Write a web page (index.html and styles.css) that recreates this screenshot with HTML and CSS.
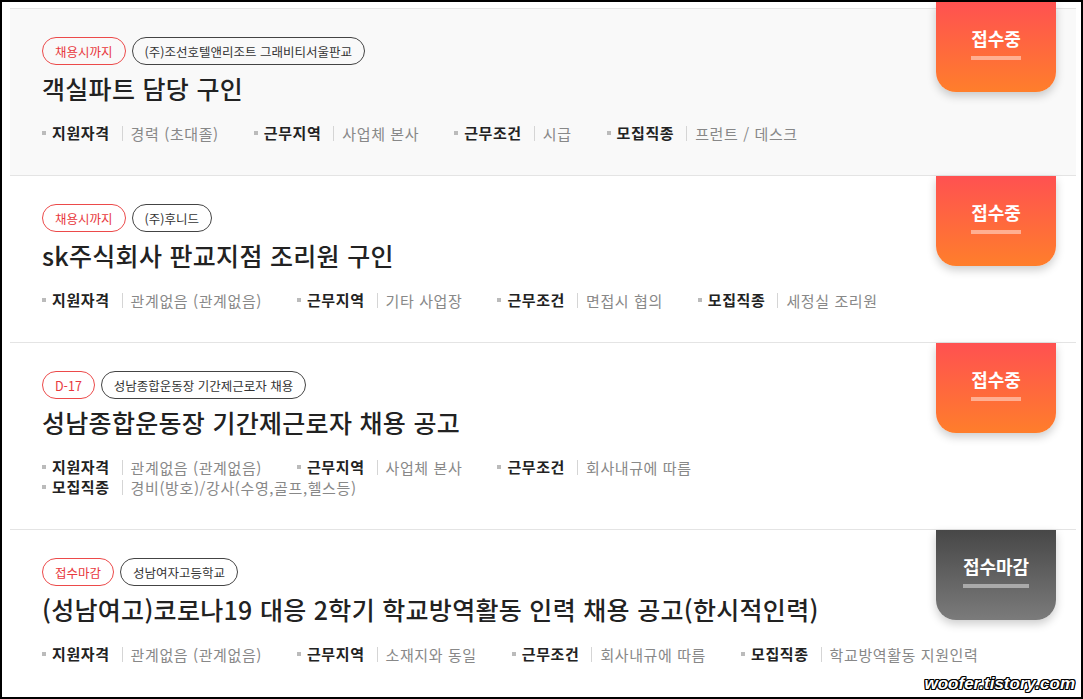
FILE: index.html
```html
<!DOCTYPE html>
<html lang="ko">
  <head>
    <meta charset="UTF-8" />
    <meta name="viewport" content="width=device-width, initial-scale=1.0" />
    <title>채용공고</title>
    <link rel="stylesheet" href="styles.css">
  </head>

  <body>
    <div class="frame">
      <ul class="job-list">
        <!-- 공고 1 -->
        <li class="job job-hover">
          <div class="tags">
            <span class="tag tag-red">채용시까지</span>
            <span class="tag">(주)조선호텔앤리조트 그래비티서울판교</span>
          </div>
          <h2 class="job-title">객실파트 담당 구인</h2>
          <ul class="info">
            <li><span class="label">지원자격</span><span class="value">경력 (초대졸)</span></li>
            <li><span class="label">근무지역</span><span class="value">사업체 본사</span></li>
            <li><span class="label">근무조건</span><span class="value">시급</span></li>
            <li><span class="label">모집직종</span><span class="value">프런트 / 데스크</span></li>
          </ul>
          <div class="state state-open"><span>접수중</span></div>
        </li>

        <!-- 공고 2 -->
        <li class="job">
          <div class="tags">
            <span class="tag tag-red">채용시까지</span>
            <span class="tag">(주)후니드</span>
          </div>
          <h2 class="job-title">sk주식회사 판교지점 조리원 구인</h2>
          <ul class="info">
            <li><span class="label">지원자격</span><span class="value">관계없음 (관계없음)</span></li>
            <li><span class="label">근무지역</span><span class="value">기타 사업장</span></li>
            <li><span class="label">근무조건</span><span class="value">면접시 협의</span></li>
            <li><span class="label">모집직종</span><span class="value">세정실 조리원</span></li>
          </ul>
          <div class="state state-open"><span>접수중</span></div>
        </li>

        <!-- 공고 3 -->
        <li class="job">
          <div class="tags">
            <span class="tag tag-red">D-17</span>
            <span class="tag">성남종합운동장 기간제근로자 채용</span>
          </div>
          <h2 class="job-title">성남종합운동장 기간제근로자 채용 공고</h2>
          <ul class="info">
            <li><span class="label">지원자격</span><span class="value">관계없음 (관계없음)</span></li>
            <li><span class="label">근무지역</span><span class="value">사업체 본사</span></li>
            <li><span class="label">근무조건</span><span class="value">회사내규에 따름</span></li>
            <li><span class="label">모집직종</span><span class="value">경비(방호)/강사(수영,골프,헬스등)</span></li>
          </ul>
          <div class="state state-open"><span>접수중</span></div>
        </li>

        <!-- 공고 4 -->
        <li class="job">
          <div class="tags">
            <span class="tag tag-red">접수마감</span>
            <span class="tag">성남여자고등학교</span>
          </div>
          <h2 class="job-title">(성남여고)코로나19 대응 2학기 학교방역활동 인력 채용 공고(한시적인력)</h2>
          <ul class="info">
            <li><span class="label">지원자격</span><span class="value">관계없음 (관계없음)</span></li>
            <li><span class="label">근무지역</span><span class="value">소재지와 동일</span></li>
            <li><span class="label">근무조건</span><span class="value">회사내규에 따름</span></li>
            <li><span class="label">모집직종</span><span class="value">학교방역활동 지원인력</span></li>
          </ul>
          <div class="state state-closed"><span>접수마감</span></div>
        </li>
      </ul>

      <div class="watermark">woofer.tistory.com</div>
    </div>
  </body>
</html>
```

FILE: styles.css
```css
* {
  box-sizing: border-box;
}

body {
  margin: 0;
  background-color: white;
  font-family: "Noto Sans CJK KR", "Noto Sans", sans-serif;
  color: #222;
}

.frame {
  position: relative;
  height: 699px;
  overflow: hidden;
  border: 2px solid #000;
  padding: 6px 5px 0 8px;
}

.job-list {
  list-style: none;
  margin: 0;
  padding: 0;
}

.job {
  position: relative;
  border-top: 1px solid #e4e4e4;
  padding: 28px 80px 32px 32px;
}

.job-hover {
  background-color: #f9f9f9;
}

/* 상단 태그 */
.tags {
  display: flex;
  gap: 6px;
}

.tag {
  display: inline-flex;
  align-items: center;
  height: 28px;
  padding: 0 12px;
  border: 1px solid #444;
  border-radius: 14px;
  font-size: 12.5px;
  color: #333;
}

.tag-red {
  border-color: #ec4a4a;
  color: #e8383d;
}

.job-title {
  margin: 6px 0 0;
  font-size: 25px;
  line-height: 34px;
  letter-spacing: 0.3px;
  font-weight: 500;
  color: #222;
}

/* 지원자격 / 근무지역 ... */
.info {
  list-style: none;
  margin: 18px 0 0;
  padding: 0;
  display: flex;
  flex-wrap: wrap;
  column-gap: 35px;
}

.info li {
  display: flex;
  align-items: center;
  font-size: 15px;
  line-height: 20px;
  letter-spacing: 0.6px;
}

.info li::before {
  content: "";
  width: 4px;
  height: 4px;
  margin-right: 6px;
  background-color: #bbb;
}

.label {
  font-weight: bold;
  color: #222;
}

.value {
  color: #888;
  border-left: 1px solid #d5d5d5;
  line-height: 15px;
  margin-left: 12px;
  padding-left: 8px;
}

/* 접수 상태 */
.state {
  position: absolute;
  top: 0;
  right: 20px;
  width: 120px;
  height: 90px;
  padding-top: 24px;
  text-align: center;
  border-radius: 0 0 20px 20px;
  box-shadow: 0 4px 10px rgba(0, 0, 0, 0.2);
  z-index: 1;
}

.job:first-child .state {
  top: -7px;
}

.state span {
  display: inline-block;
  padding-bottom: 6px;
  border-bottom: 4px solid rgba(255, 255, 255, 0.45);
  font-size: 18px;
  line-height: 24px;
  font-weight: bold;
  color: white;
}

.state-open {
  background: linear-gradient(to bottom, #ff5151, #ff7e2b);
}

.state-closed {
  background: linear-gradient(to bottom, #474747, #7b7b7b);
}

.state-closed span {
  border-bottom-color: #aaa;
}

.watermark {
  position: absolute;
  right: 6px;
  bottom: 3px;
  z-index: 2;
  font-family: "Liberation Sans", sans-serif;
  font-style: italic;
  font-weight: bold;
  font-size: 17px;
  color: white;
  text-shadow: 1px 0 0 #000, -1px 0 0 #000, 0 1px 0 #000, 0 -1px 0 #000,
    1px 1px 0 #000, -1px -1px 0 #000, 1px -1px 0 #000, -1px 1px 0 #000;
}
```
